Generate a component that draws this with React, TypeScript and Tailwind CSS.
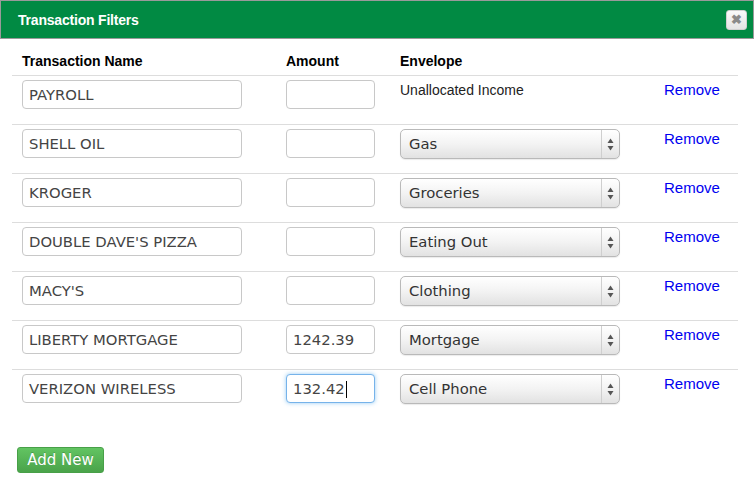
import React from 'react';

interface Row {
  name: string;
  amount: string;
  envelope: string | null;
  focused?: boolean;
}

const rows: Row[] = [
  { name: 'PAYROLL', amount: '', envelope: null },
  { name: 'SHELL OIL', amount: '', envelope: 'Gas' },
  { name: 'KROGER', amount: '', envelope: 'Groceries' },
  { name: "DOUBLE DAVE'S PIZZA", amount: '', envelope: 'Eating Out' },
  { name: "MACY'S", amount: '', envelope: 'Clothing' },
  { name: 'LIBERTY MORTGAGE', amount: '1242.39', envelope: 'Mortgage' },
  { name: 'VERIZON WIRELESS', amount: '132.42', envelope: 'Cell Phone', focused: true },
];

const inputFont = "font-['DejaVu_Sans','Verdana',sans-serif]";
const helv = "font-['Liberation_Sans','Arial',sans-serif]";

const SelectBox: React.FC<{ value: string }> = ({ value }) => (
  <div className="flex h-[30px] w-[220px] items-stretch rounded-[5px] border border-[#b9b9b9] bg-gradient-to-b from-white via-[#f3f3f3] to-[#e2e2e2] shadow-[0_1px_1px_rgba(0,0,0,0.08)]">
    <div className={`flex flex-1 items-center pl-[8px] pt-[1px] text-[14.8px] text-[#333] ${inputFont}`}>{value}</div>
    <div className="flex w-[18px] items-center justify-center border-l border-[#cfcfcf]">
      <svg width="7" height="13" viewBox="0 0 7 13">
        <path d="M3.5 0.5 L6.5 5 L0.5 5 Z" fill="#555" />
        <path d="M3.5 12.5 L6.5 8 L0.5 8 Z" fill="#555" />
      </svg>
    </div>
  </div>
);

export default function App() {
  return (
    <div className="h-[481px] w-[754px] overflow-hidden bg-white">
      <div className="flex h-[39px] items-center justify-between border border-[#9a9a9a] bg-[#018a43] pl-[17px] pr-[6px]">
        <span className={`pt-[1px] text-[14px] font-bold tracking-[-0.2px] text-white ${helv}`}>Transaction Filters</span>
        <div className="flex h-[20px] w-[21px] items-center justify-center rounded-[3px] border border-[#d0d0d0] bg-gradient-to-b from-[#fafafa] to-[#e4e4e4]">
          <span className={`text-[13px] font-bold leading-none text-[#8a8a8a] ${helv}`}>✖</span>
        </div>
      </div>

      <div className="ml-[12px] w-[726px]">
        <div className={`flex h-[36px] items-end pb-[3px] text-[14px] font-bold text-black ${helv}`}>
          <div className="w-[274px] pl-[10px]">Transaction Name</div>
          <div className="w-[114px]">Amount</div>
          <div>Envelope</div>
        </div>

        {rows.map((r) => (
          <div key={r.name} className="flex h-[49px] border-t border-[#dddddd] pt-[4px]">
            <div className="w-[274px] pl-[10px]">
              <div className={`flex h-[29px] w-[220px] items-center rounded-[4px] border border-[#c8c8c8] bg-white pl-[6px] pt-[1px] text-[14.8px] text-[#444] ${inputFont}`}>
                {r.name}
              </div>
            </div>
            <div className="w-[114px]">
              <div
                className={`flex h-[29px] w-[89px] items-center rounded-[4px] border bg-white pl-[6px] pt-[1px] text-[14.8px] text-[#444] ${inputFont} ${
                  r.focused ? 'border-[#76b3ea] shadow-[0_0_4px_rgba(82,168,236,0.6)]' : 'border-[#c8c8c8]'
                }`}
              >
                {r.amount}
                {r.focused && <span className="ml-[1px] h-[17px] w-px bg-black" />}
              </div>
            </div>
            <div className="w-[264px]">
              {r.envelope ? (
                <SelectBox value={r.envelope} />
              ) : (
                <div className={`text-[14px] text-[#222] ${helv}`}>Unallocated Income</div>
              )}
            </div>
            <div className={`-mt-[1px] text-[15px] text-[#0000f0] ${helv}`}>Remove</div>
          </div>
        ))}
      </div>

      <div className="ml-[17px] mt-[29px]">
        <button className={`flex h-[26px] w-[87px] items-center justify-center rounded-[3px] border border-[#48a048] bg-gradient-to-b from-[#62c462] to-[#4aa34a] pt-[1px] text-[15px] text-white [text-shadow:0_-1px_0_rgba(0,0,0,0.2)] ${inputFont}`}>
          Add New
        </button>
      </div>
    </div>
  );
}
